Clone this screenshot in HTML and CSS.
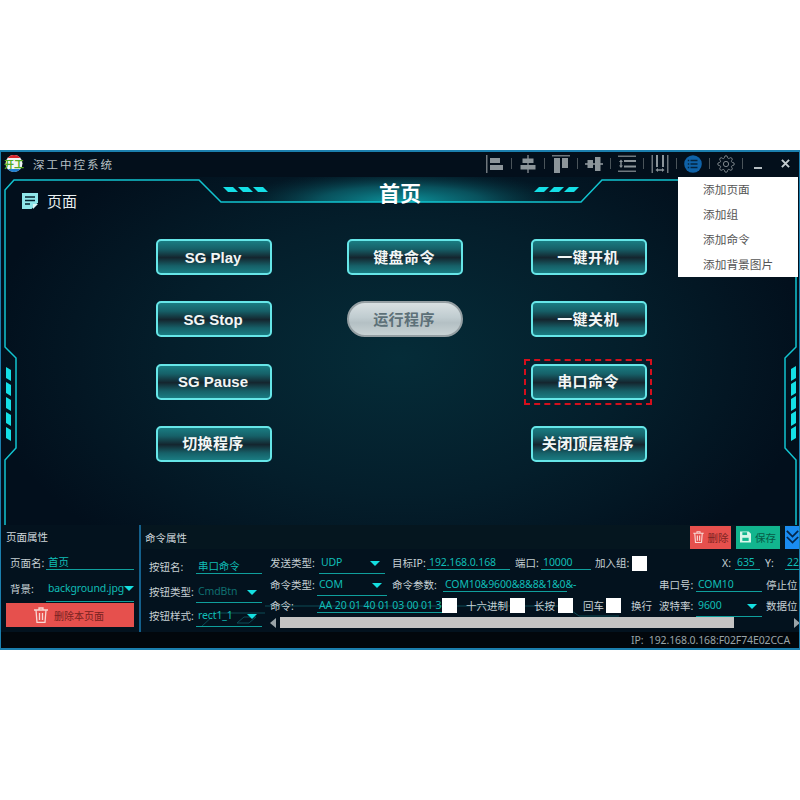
FILE: index.html
```html
<!DOCTYPE html>
<html>

<head>
    <title>深工中控系统</title>
    <link rel="stylesheet" href="styles.css">
</head>

<body>
    <div class="window">
        <header class="title-bar">
            <svg class="logo" viewBox="0 0 20 17">
                <circle cx="10" cy="8.500" r="8.500" fill="#f4f6f4" />
                <path d="M3.500 3h13a8.500 8.500 0 0 0-13 0z" fill="#d8262c" />
                <path d="M3.500 14h13a8.500 8.500 0 0 1-13 0z" fill="#1f7fd0" />
                <text x="10" y="12.500" class="logo-text" textLength="20" lengthAdjust="spacingAndGlyphs">开工</text>
            </svg>
            <span class="app-title">深工中控系统</span>
            <div class="toolbar">
                <svg class="tool" viewBox="0 0 18 18">
                    <rect x="0" y="0" width="1.500" height="18" fill="#6f777d" />
                    <rect x="4" y="3" width="10" height="5" />
                    <rect x="4" y="10" width="13" height="5" />
                </svg>
                <i class="sep"></i>
                <svg class="tool" viewBox="0 0 18 18">
                    <rect x="8.200" y="0" width="1.600" height="18" fill="#6f777d" />
                    <rect x="3.500" y="3.500" width="11" height="4.500" />
                    <rect x="1.500" y="10" width="15" height="4.500" />
                </svg>
                <i class="sep"></i>
                <svg class="tool" viewBox="0 0 18 18">
                    <rect x="0" y="0" width="18" height="1.500" fill="#6f777d" />
                    <rect x="2" y="3" width="6" height="15" />
                    <rect x="10" y="3" width="6" height="10" />
                </svg>
                <i class="sep"></i>
                <svg class="tool" viewBox="0 0 18 18">
                    <rect x="0" y="8.200" width="18" height="1.600" />
                    <rect x="2.500" y="5" width="5.500" height="8" />
                    <rect x="10" y="2" width="5.500" height="14" />
                </svg>
                <i class="sep"></i>
                <svg class="tool" viewBox="0 0 18 18">
                    <rect x="0" y="0.500" width="18" height="1.500" fill="#6f777d" />
                    <rect x="6" y="5" width="12" height="2" />
                    <rect x="6" y="10.500" width="12" height="2" />
                    <rect x="0" y="15.500" width="18" height="1.500" fill="#6f777d" />
                    <path d="M3 4.500l2 2.500h-1.300v3.500h1.300l-2 2.500-2-2.500h1.300v-3.500h-1.300z" />
                </svg>
                <i class="sep"></i>
                <svg class="tool" viewBox="0 0 18 18">
                    <rect x="0.500" y="0" width="1.500" height="18" fill="#6f777d" />
                    <rect x="16" y="0" width="1.500" height="18" fill="#6f777d" />
                    <rect x="5" y="0" width="2" height="12" />
                    <rect x="11" y="0" width="2" height="12" />
                    <path d="M4.500 15l2.500-2v1.300h4v-1.300l2.500 2-2.500 2v-1.300h-4v1.300z" />
                </svg>
                <i class="sep"></i>
                <svg class="tool" viewBox="0 0 18 18">
                    <circle cx="9" cy="9" r="8.800" fill="#0f62a8" />
                    <path d="M6.500 5.500h7M6.500 9h7M6.500 12.500h7M3.800 5.500h1.400M3.800 9h1.400M3.800 12.500h1.400" stroke="#04243f" stroke-width="1.500" fill="none" />
                </svg>
                <i class="sep"></i>
                <svg class="tool" viewBox="0 0 24 24">
                    <circle cx="12" cy="12" r="3.500" class="gear" />
                    <path class="gear" d="M19.400 15a1.650 1.650 0 0 0 .33 1.820l.06.06a2 2 0 0 1 0 2.830 2 2 0 0 1-2.830 0l-.06-.06a1.650 1.650 0 0 0-1.820-.33 1.650 1.650 0 0 0-1 1.510V21a2 2 0 0 1-2 2 2 2 0 0 1-2-2v-.09A1.650 1.650 0 0 0 9 19.400a1.650 1.650 0 0 0-1.820.33l-.06.06a2 2 0 0 1-2.830 0 2 2 0 0 1 0-2.830l.06-.06a1.650 1.650 0 0 0 .33-1.820 1.650 1.650 0 0 0-1.510-1H3a2 2 0 0 1-2-2 2 2 0 0 1 2-2h.09A1.650 1.650 0 0 0 4.600 9a1.650 1.650 0 0 0-.33-1.820l-.06-.06a2 2 0 0 1 0-2.830 2 2 0 0 1 2.830 0l.06.06a1.650 1.650 0 0 0 1.820.33H9a1.650 1.650 0 0 0 1-1.510V3a2 2 0 0 1 2-2 2 2 0 0 1 2 2v.09a1.650 1.650 0 0 0 1 1.510 1.650 1.650 0 0 0 1.820-.33l.06-.06a2 2 0 0 1 2.830 0 2 2 0 0 1 0 2.830l-.06.06a1.650 1.650 0 0 0-.33 1.820V9a1.650 1.650 0 0 0 1.510 1H21a2 2 0 0 1 2 2 2 2 0 0 1-2 2h-.09a1.650 1.650 0 0 0-1.510 1z" />
                </svg>
                <i class="sep"></i>
                <span class="win-min"></span>
                <svg class="win-close" viewBox="0 0 10 10">
                    <path d="M1 1l8 8M9 1l-8 8" stroke="#c4ccd0" stroke-width="2.200" />
                </svg>
            </div>
        </header>

        <main class="stage">
            <svg class="frame" viewBox="0 0 800 348">
                <defs>
                    <radialGradient id="glow" gradientUnits="userSpaceOnUse" cx="0" cy="0" r="1" gradientTransform="translate(400 25) scale(165 32)">
                        <stop offset="0" stop-color="#0c97a0" />
                        <stop offset="0.5" stop-color="#0a5f6a" stop-opacity="0.8" />
                        <stop offset="1" stop-color="#06303c" stop-opacity="0" />
                    </radialGradient>
                </defs>
                <polygon points="198,0 601,0 580,25 220,25" fill="url(#glow)" />
                <polyline class="line" points="4,348 4,283 15,271 15,181 4,170 4,13 13,3 198,3 220,25 580,25 601,3 795,3 795,170 784,181 784,271 795,283 795,348" />
                <g class="dash">
                    <polygon points="222,10 232,10 237,15 227,15" />
                    <polygon points="237,10 247,10 252,15 242,15" />
                    <polygon points="252,10 262,10 267,15 257,15" />
                    <polygon points="533,15 543,15 548,10 538,10" />
                    <polygon points="548,15 558,15 563,10 553,10" />
                    <polygon points="563,15 573,15 578,10 568,10" />
                    <polygon points="5,190 10,193 10,204 5,201" />
                    <polygon points="5,205 10,208 10,219 5,216" />
                    <polygon points="5,220 10,223 10,234 5,231" />
                    <polygon points="5,235 10,238 10,249 5,246" />
                    <polygon points="5,250 10,253 10,264 5,261" />
                    <polygon points="795,189 790,192 790,204 795,201" />
                    <polygon points="795,204 790,207 790,219 795,216" />
                    <polygon points="795,219 790,222 790,234 795,231" />
                    <polygon points="795,234 790,237 790,249 795,246" />
                    <polygon points="795,249 790,252 790,264 795,261" />
                </g>
            </svg>

            <h1 class="page-title">首页</h1>

            <div class="page-tag">
                <svg class="page-icon" viewBox="0 0 16 16">
                    <path d="M0 0h16v9.500l-6.500 6.500h-9.500z" fill="#8fe6ea" />
                    <path d="M3 4h10M3 7.500h10M3 11h5" stroke="#04222e" stroke-width="1.600" />
                    <path d="M11 16v-5h5z" fill="#d8f6f7" />
                </svg>
                <span>页面</span>
            </div>

            <div class="button-grid">
                <button class="cmd">SG Play</button>
                <button class="cmd cn">键盘命令</button>
                <button class="cmd cn">一键开机</button>
                <button class="cmd">SG Stop</button>
                <button class="cmd cn pill">运行程序</button>
                <button class="cmd cn">一键关机</button>
                <button class="cmd">SG Pause</button>
                <button class="cmd cn selected col-3">串口命令</button>
                <button class="cmd cn">切换程序</button>
                <button class="cmd cn col-3">关闭顶层程序</button>
            </div>
        </main>

        <section class="bottom">
            <svg class="bottom-decor" viewBox="0 0 800 105">
                <path d="M200 102l15-14h49M264 81h300l14 10h40M236 98l7-6h12l-7 6z" fill="none" stroke="#0c4a55" />
            </svg>

            <div class="panel-left">
                <div class="panel-head">页面属性</div>
                <div class="left-row row-name">
                    <label class="lbl w-36">页面名:</label>
                    <div class="field w-88">首页</div>
                </div>
                <div class="left-row row-bg">
                    <label class="lbl w-36">背景:</label>
                    <div class="field w-88 select tall">background.jpg<i class="caret"></i></div>
                </div>
                <button class="del-page">
                    <svg class="trash" viewBox="0 0 14 16">
                        <path d="M0 3h14M5 3V1h4v2M2 3l1 12.500h8l1-12.500M5.500 6v7M8.500 6v7" stroke="#f8d8d4" stroke-width="1.300" fill="none" />
                    </svg>
                    删除本页面
                </button>
            </div>

            <div class="panel-right">
                <div class="panel-head head-right">
                    <span>命令属性</span>
                    <div class="head-actions">
                        <button class="act act-del">
                            <svg class="act-icon" viewBox="0 0 14 16">
                                <path d="M0 3h14M5 3V1h4v2M2 3l1 12.500h8l1-12.500M5.500 6v7M8.500 6v7" stroke="#f8d8d4" stroke-width="1.500" fill="none" />
                            </svg>
                            删除
                        </button>
                        <button class="act act-save">
                            <svg class="act-icon" viewBox="0 0 14 14">
                                <path d="M0 0h11l3 3v11h-14z" fill="#d8f6ea" />
                                <rect x="3" y="1" width="6" height="3.500" fill="#12b58e" />
                                <rect x="3" y="8" width="8" height="4" fill="#12b58e" />
                            </svg>
                            保存
                        </button>
                        <button class="act act-more">
                            <svg class="more-icon" viewBox="0 0 15 18">
                                <path d="M1 2l6.500 6.500 6.500-6.500M1 9l6.500 6.500 6.500-6.500" stroke="#04264a" stroke-width="2" fill="none" />
                            </svg>
                        </button>
                    </div>
                </div>

                <div class="form">
                    <div class="form-side">
                        <div class="side-row">
                            <label class="lbl w-47">按钮名:</label>
                            <div class="field w-66">串口命令</div>
                        </div>
                        <div class="side-row">
                            <label class="lbl w-47">按钮类型:</label>
                            <div class="field w-66 select dim">CmdBtn<i class="caret"></i></div>
                        </div>
                        <div class="side-row">
                            <label class="lbl w-47">按钮样式:</label>
                            <div class="field w-66 select">rect1_1<i class="caret"></i></div>
                        </div>
                    </div>

                    <div class="form-main">
                        <div class="form-row row-1">
                            <label class="lbl w-49">发送类型:</label>
                            <div class="field w-66 select">UDP<i class="caret"></i></div>
                            <label class="lbl w-35 ml-7">目标IP:</label>
                            <div class="field w-83">192.168.0.168</div>
                            <label class="lbl w-26 ml-5">端口:</label>
                            <div class="field w-50">10000</div>
                            <label class="lbl w-37 ml-4">加入组:</label>
                            <i class="check"></i>
                            <label class="lbl w-13 ml-75">X:</label>
                            <div class="field w-25">635</div>
                            <label class="lbl w-20 ml-5">Y:</label>
                            <div class="field w-25">22</div>
                        </div>
                        <div class="form-row row-2">
                            <label class="lbl w-47">命令类型:</label>
                            <div class="field w-70 select">COM<i class="caret"></i></div>
                            <label class="lbl w-51 ml-5">命令参数:</label>
                            <div class="field w-124">COM10&amp;9600&amp;8&amp;8&amp;1&amp;0&amp;-</div>
                            <label class="lbl w-37 ml-92">串口号:</label>
                            <div class="field w-66">COM10</div>
                            <label class="lbl w-34 ml-4">停止位</label>
                        </div>
                        <div class="form-row row-3">
                            <label class="lbl w-47">命令:</label>
                            <div class="field w-125">AA 20 01 40 01 03 00 01 3</div>
                            <i class="check up"></i>
                            <label class="lbl w-44 ml-9">十六进制</label>
                            <i class="check up"></i>
                            <label class="lbl w-24 ml-9">长按</label>
                            <i class="check up"></i>
                            <label class="lbl w-23 ml-10">回车</label>
                            <i class="check up"></i>
                            <label class="lbl w-28 ml-10">换行</label>
                            <label class="lbl w-37">波特率:</label>
                            <div class="field w-66 select">9600<i class="caret"></i></div>
                            <label class="lbl w-34 ml-4">数据位</label>
                        </div>
                        <div class="scrollbar">
                            <i class="arrow-left"></i>
                            <div class="thumb"></div>
                            <i class="arrow-right"></i>
                        </div>
                    </div>
                </div>
            </div>
        </section>

        <footer class="status-bar">IP: &nbsp;192.168.0.168:F02F74E02CCA</footer>

        <ul class="menu">
            <li>添加页面</li>
            <li>添加组</li>
            <li>添加命令</li>
            <li>添加背景图片</li>
        </ul>
    </div>
</body>

</html>
```

FILE: styles.css
```css
body {
    margin: 0;
    background-color: #fff;
    font-family: "Noto Sans", "Noto Sans CJK SC", sans-serif;
}

.window {
    position: relative;
    box-sizing: border-box;
    width: 800px;
    height: 500px;
    margin-top: 150px;
    border: 1px solid #1b7fae;
    border-width: 2px 1px;
    background-color: #030d18;
    display: flex;
    flex-direction: column;
    overflow: hidden;
}

/* title bar */
.title-bar {
    height: 25px;
    flex: none;
    display: flex;
    align-items: center;
    padding-left: 3px;
    background-color: #030f1b;
}

.logo {
    width: 20px;
    height: 17px;
    flex: none;
    margin-bottom: 2px;
}

.logo-text {
    font-size: 10px;
    font-weight: bold;
    fill: #55ad25;
    text-anchor: middle;
    font-family: "Noto Sans CJK SC", sans-serif;
}

.app-title {
    margin: 0 0 2px 9px;
    font-size: 11.500px;
    letter-spacing: 2px;
    color: #b9c2c6;
}

.toolbar {
    margin-left: auto;
    display: flex;
    align-items: center;
    height: 100%;
    box-sizing: border-box;
    padding-bottom: 2px;
}

.tool {
    width: 18px;
    height: 18px;
    flex: none;
    fill: #8c959a;
}

.gear {
    fill: none;
    stroke: #7f888d;
    stroke-width: 1.300;
}

.sep {
    width: 1px;
    height: 11px;
    margin: 0 7px;
    background-color: #4a545a;
}

.win-min {
    width: 8px;
    height: 2px;
    margin: 8px 0 0 4px;
    background-color: #b6bec2;
}

.win-close {
    width: 9px;
    height: 9px;
    margin: 0 9px 0 19px;
}

/* stage */
.stage {
    position: relative;
    flex: none;
    height: 348px;
    background: radial-gradient(ellipse 420px 250px at 50% 52%, #052c38 0%, #041e2b 55%, #020f1c 100%);
}

.frame {
    position: absolute;
    top: 0;
    left: 0;
    width: 800px;
    height: 348px;
}

.line {
    fill: none;
    stroke: #12c4d0;
    stroke-width: 1.500;
}

.dash polygon {
    fill: #14dfe6;
}

.page-title {
    position: absolute;
    top: 2px;
    left: 0;
    width: 100%;
    margin: 0;
    text-align: center;
    font-size: 21px;
    line-height: 28px;
    font-weight: bold;
    color: #fff;
}

.page-tag {
    position: absolute;
    top: 15px;
    left: 21px;
    display: flex;
    align-items: center;
    gap: 9px;
    font-size: 15px;
    line-height: 18px;
    color: #e8eef0;
}

.page-icon {
    width: 16px;
    height: 16px;
}

.button-grid {
    position: relative;
    display: grid;
    grid-template-columns: 191px 184px 116px;
    grid-auto-rows: 36px;
    row-gap: 26.300px;
    padding: 62px 0 0 155px;
}

.cmd {
    width: 116px;
    height: 36px;
    box-sizing: border-box;
    padding: 0 2px 0 0;
    border: 2px solid #66e6e8;
    border-radius: 5px;
    background: linear-gradient(#1a7c82 0%, #166068 25%, #14252e 52%, #166068 78%, #1a7c82 100%);
    color: #f2f6f6;
    font-family: "Liberation Sans", "Noto Sans CJK SC", sans-serif;
    font-size: 15px;
    font-weight: bold;
}

.cn {
    padding-bottom: 2px;
    font-family: "Noto Sans CJK SC", sans-serif;
    letter-spacing: 0.400px;
}

.pill {
    border: 2px solid #959fa3;
    border-radius: 18px;
    background: linear-gradient(#d8e0e2 0%, #c0ccd0 45%, #b4c0c4 62%, #c8d2d4 100%);
    color: #5d7078;
}

.selected {
    position: relative;
}

.selected::after {
    content: "";
    position: absolute;
    inset: -7px -7px -7px -9px;
    border: 2px dashed #d40f1c;
}

.col-3 {
    grid-column: 3;
}

/* bottom panels */
.bottom {
    position: relative;
    flex: none;
    height: 107px;
    display: flex;
    background-color: #03121e;
}

.bottom-decor {
    position: absolute;
    top: 0;
    left: 0;
    width: 800px;
    height: 105px;
}

.panel-left {
    position: relative;
    width: 140px;
    flex: none;
    box-sizing: border-box;
    padding-left: 5px;
    border-right: 2px solid #14608c;
}

.panel-head {
    height: 22px;
    display: flex;
    align-items: center;
    font-size: 10.500px;
    color: #d0d8dc;
}

.left-row {
    display: flex;
    align-items: flex-start;
    height: 26px;
    padding-left: 4px;
}

.row-name {
    margin-top: 9px;
}

.row-bg {
    height: 21px;
}

.del-page {
    display: flex;
    align-items: center;
    gap: 6px;
    width: 128px;
    height: 24px;
    padding: 0 0 0 28px;
    border: none;
    background-color: #e6504d;
    color: #772220;
    font-family: "Noto Sans CJK SC", sans-serif;
    font-size: 10px;
}

.trash {
    width: 14px;
    height: 16px;
}

.panel-right {
    position: relative;
    flex: 1;
    min-width: 0;
    overflow: hidden;
}

.head-right {
    height: 24px;
    padding-left: 4px;
    justify-content: space-between;
    background-color: #05161f;
}

.head-actions {
    display: flex;
    gap: 5px;
    margin-right: -6px;
}

.act {
    display: flex;
    align-items: center;
    justify-content: center;
    gap: 4px;
    height: 23px;
    padding: 0;
    border: none;
    font-family: "Noto Sans CJK SC", sans-serif;
    font-size: 10.500px;
}

.act-del {
    width: 41px;
    background-color: #e6504d;
    color: #7d2422;
}

.act-save {
    width: 44px;
    background-color: #12b58e;
    color: #075a46;
}

.act-more {
    width: 20px;
    background-color: #1a8cf0;
    justify-content: flex-start;
    padding-left: 1px;
}

.act-icon {
    width: 11px;
    height: 12px;
}

.more-icon {
    width: 13px;
    height: 16px;
}

.form {
    display: flex;
    gap: 8px;
    padding-left: 8px;
    width: 700px;
}

.form-side {
    flex: none;
    padding-top: 11px;
}

.side-row {
    display: flex;
    align-items: flex-start;
    height: 24.500px;
}

.form-main {
    flex: none;
    width: 530px;
    padding-top: 7px;
}

.form-row {
    display: flex;
    align-items: flex-start;
    height: 22px;
    white-space: nowrap;
}

.row-2 {
    height: 21px;
}

.row-3 {
    height: 18px;
}

.lbl {
    flex: none;
    font-size: 10.500px;
    color: #c6d0d4;
    line-height: 14px;
}

.field {
    position: relative;
    flex: none;
    box-sizing: border-box;
    height: 14px;
    padding-left: 2px;
    border-bottom: 1px solid #0f9f9c;
    font-size: 10.500px;
    letter-spacing: -0.120px;
    line-height: 13px;
    color: #10bdb6;
    white-space: nowrap;
}

.select {
    height: 18px;
}

.tall {
    height: 20px;
}

.dim {
    color: #0f6f70;
}

.caret {
    position: absolute;
    right: 5px;
    top: 5px;
    border-left: 5px solid transparent;
    border-right: 5px solid transparent;
    border-top: 5px solid #14dfe0;
}

.tall .caret {
    right: 0;
    top: 4px;
}

.check {
    position: relative;
    flex: none;
    width: 15px;
    height: 15px;
    background-color: #fff;
}

.up {
    margin-top: -1px;
}

.w-13 { width: 13px; }
.w-20 { width: 20px; }
.w-23 { width: 23px; }
.w-24 { width: 24px; }
.w-25 { width: 25px; }
.w-26 { width: 26px; }
.w-28 { width: 28px; }
.w-34 { width: 34px; }
.w-35 { width: 35px; }
.w-36 { width: 36px; }
.w-37 { width: 37px; }
.w-44 { width: 44px; }
.w-47 { width: 47px; }
.w-49 { width: 49px; }
.w-50 { width: 50px; }
.w-51 { width: 51px; }
.w-66 { width: 66px; }
.w-70 { width: 70px; }
.w-83 { width: 83px; }
.w-88 { width: 88px; }
.w-124 { width: 124px; }
.w-125 { width: 125px; }
.ml-4 { margin-left: 4px; }
.ml-5 { margin-left: 5px; }
.ml-7 { margin-left: 7px; }
.ml-9 { margin-left: 9px; }
.ml-10 { margin-left: 10px; }
.ml-75 { margin-left: 75px; }
.ml-92 { margin-left: 92px; }

.scrollbar {
    display: flex;
    align-items: center;
    height: 11px;
}

.thumb {
    width: 454px;
    height: 11px;
    margin-left: 4px;
    background-color: #c4c4c4;
}

.arrow-left {
    border-top: 5px solid transparent;
    border-bottom: 5px solid transparent;
    border-right: 6px solid #9aa4a8;
}

.arrow-right {
    margin-left: auto;
    border-top: 5px solid transparent;
    border-bottom: 5px solid transparent;
    border-left: 6px solid #9aa4a8;
}

/* status */
.status-bar {
    flex: 1;
    display: flex;
    align-items: center;
    justify-content: flex-end;
    padding-right: 9px;
    font-size: 10.500px;
    letter-spacing: -0.100px;
    color: #9aa4a8;
    background-color: #02070c;
}

/* context menu */
.menu {
    position: absolute;
    top: 25px;
    right: 1px;
    width: 120px;
    height: 100px;
    margin: 0;
    padding: 0;
    list-style: none;
    background-color: #fff;
    box-sizing: border-box;
}

.menu li {
    height: 25px;
    line-height: 25px;
    padding-left: 25px;
    font-size: 11.700px;
    color: #555;
}
```
